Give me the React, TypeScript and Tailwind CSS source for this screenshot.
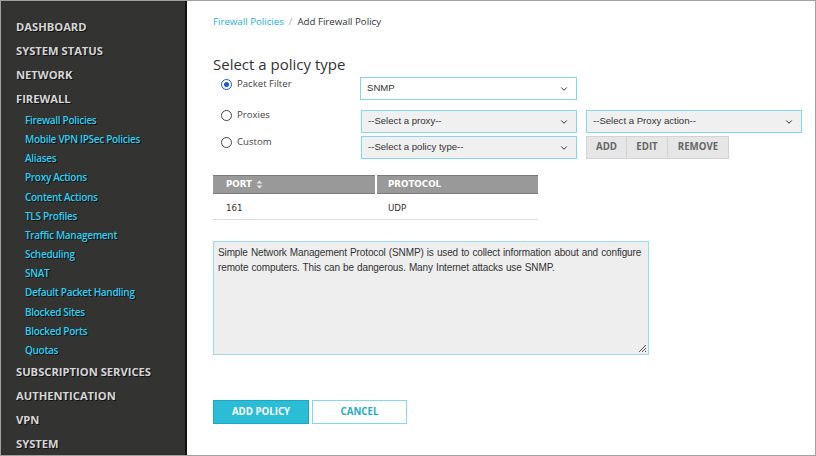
import { ChevronDown } from 'lucide-react';

const sans = { fontFamily: '"Open Sans", "Noto Sans", sans-serif' };
const arial = { fontFamily: '"Liberation Sans", Arial, sans-serif' };

const sections = ['DASHBOARD', 'SYSTEM STATUS', 'NETWORK', 'FIREWALL'];
const firewallItems = [
    'Firewall Policies',
    'Mobile VPN IPSec Policies',
    'Aliases',
    'Proxy Actions',
    'Content Actions',
    'TLS Profiles',
    'Traffic Management',
    'Scheduling',
    'SNAT',
    'Default Packet Handling',
    'Blocked Sites',
    'Blocked Ports',
    'Quotas',
];
const bottomSections = ['SUBSCRIPTION SERVICES', 'AUTHENTICATION', 'VPN', 'SYSTEM'];

function Heading({ label }: { label: string }) {
    return (
        <div className="h-6 leading-6 pl-[15px] text-[11.2px] font-bold text-[#d6d6d6] [text-shadow:1px_1px_0_#111]">
            {label}
        </div>
    );
}

function Select({ text, white, width }: { text: string; white?: boolean; width: string }) {
    return (
        <div
            className={`${width} h-[23px] flex items-center justify-between border border-[#86d6e8] pl-[6px] pr-[7px] text-[9.6px] text-[#333] ${white ? 'bg-white' : 'bg-[#f0f0f0]'}`}
            style={arial}
        >
            <span>{text}</span>
            <ChevronDown size={10} strokeWidth={2.4} className="text-[#333]" />
        </div>
    );
}

function Radio({ checked, label }: { checked?: boolean; label: string }) {
    return (
        <div className="flex items-center gap-[5px] text-[9.6px] text-[#444] leading-[14px]">
            <span
                className={`w-[11px] h-[11px] rounded-full border-[1.5px] flex items-center justify-center ${checked ? 'border-[#1a56d6]' : 'border-[#444]'}`}
            >
                {checked && <span className="w-[5px] h-[5px] rounded-full bg-[#1a56d6]" />}
            </span>
            <span>{label}</span>
        </div>
    );
}

export default function App() {
    return (
        <div className="w-[816px] h-[456px] flex border border-[#a0a0a0] overflow-hidden bg-white" style={sans}>
            {/* 侧边栏 */}
            <div className="w-[186px] shrink-0 bg-[#333332] border-r-2 border-[#111] pt-[14px]">
                {sections.map((s) => (
                    <Heading key={s} label={s} />
                ))}
                <div className="pl-[24px]">
                    {firewallItems.map((item) => (
                        <div key={item} className="h-[19.17px] leading-[19.17px] text-[10px] tracking-[-0.3px] font-semibold text-[#2fd0f2] [text-shadow:1px_1px_0_#111]">
                            {item}
                        </div>
                    ))}
                </div>
                {bottomSections.map((s) => (
                    <Heading key={s} label={s} />
                ))}
            </div>

            {/* 主内容 */}
            <div className="flex-1 pl-[26px] pt-[14px]">
                <div className="text-[9.7px] leading-[14px] flex gap-[5px]">
                    <span className="text-[#27aed0]">Firewall Policies</span>
                    <span className="text-[#aaa]">/</span>
                    <span className="text-[#333]">Add Firewall Policy</span>
                </div>

                <div className="mt-[25px] text-[15px] leading-[20px] text-[#333]">Select a policy type</div>

                <div className="mt-[3px] flex items-start">
                    <div className="w-[147px] pl-[8px]">
                        <Radio checked label="Packet Filter" />
                    </div>
                    <Select text="SNMP" white width="w-[217px]" />
                </div>

                <div className="mt-[10px] flex items-start">
                    <div className="w-[148px] pl-[8px] -mt-[2px]">
                        <Radio label="Proxies" />
                    </div>
                    <Select text="--Select a proxy--" width="w-[216px]" />
                    <div className="ml-[9px]">
                        <Select text="--Select a Proxy action--" width="w-[216px]" />
                    </div>
                </div>

                <div className="mt-[3px] flex items-start">
                    <div className="w-[148px] pl-[8px] -mt-[1px]">
                        <Radio label="Custom" />
                    </div>
                    <Select text="--Select a policy type--" width="w-[216px]" />
                    <div className="ml-[9px] flex h-[23px] text-[9.7px] font-bold text-[#666]">
                        <div className="w-[41px] flex items-center justify-center bg-[#e6e6e6] border border-[#d2d2d2]">ADD</div>
                        <div className="w-[41px] flex items-center justify-center bg-[#e6e6e6] border-y border-r border-[#d2d2d2]">EDIT</div>
                        <div className="w-[61px] flex items-center justify-center bg-[#e6e6e6] border-y border-r border-[#d2d2d2]">REMOVE</div>
                    </div>
                </div>

                {/* 端口表 */}
                <div className="mt-[16px] w-[325px]" style={{ fontFamily: '"DejaVu Sans", Verdana, sans-serif' }}>
                    <div className="flex h-[19px] text-[8.7px] font-bold text-white">
                        <div className="w-[162px] flex items-center gap-[4px] pl-[13px] bg-[#999] border-y border-[#7a7a7a]">
                            <span>PORT</span>
                            <svg width="7" height="9" viewBox="0 0 7 9">
                                <path d="M0.5 3.5 L3.5 0.5 L6.5 3.5 Z M0.5 5.5 L3.5 8.5 L6.5 5.5 Z" fill="#e6e6e6" />
                            </svg>
                        </div>
                        <div className="w-[2px] bg-white" />
                        <div className="flex-1 flex items-center pl-[11px] bg-[#999] border-y border-[#7a7a7a]">PROTOCOL</div>
                    </div>
                    <div className="flex h-[26px] items-center pt-[4px] text-[8.7px] text-[#333] border-b border-[#ddd]">
                        <div className="w-[164px] pl-[13px]">161</div>
                        <div className="pl-[11px]">UDP</div>
                    </div>
                </div>

                {/* 说明 */}
                <div
                    className="relative mt-[21px] w-[436px] h-[114px] border border-[#9cdcea] bg-[#eeeeee] pl-[4px] pr-[2px] pt-[3px] text-[10px] tracking-[-0.13px] [word-spacing:0.5px] leading-[15px] text-[#333] overflow-hidden"
                    style={arial}
                >
                    <div className="whitespace-nowrap">Simple Network Management Protocol (SNMP) is used to collect information about and configure</div>
                    <div>remote computers. This can be dangerous. Many Internet attacks use SNMP.</div>
                    <svg className="absolute right-[1px] bottom-[1px]" width="10" height="10" viewBox="0 0 10 10">
                        <path d="M9 2 L2 9 M9 5 L5 9 M9 8 L8 9" stroke="#555" strokeWidth="1" />
                    </svg>
                </div>

                <div className="mt-[45px] flex gap-[3px] text-[9.7px] font-bold">
                    <div className="w-[96px] h-[24px] flex items-center justify-center bg-[#2bbcd6] border border-[#1ea5c0] text-white">
                        ADD POLICY
                    </div>
                    <div className="w-[95px] h-[24px] flex items-center justify-center bg-white border border-[#86d8ea] text-[#27a9c9]">
                        CANCEL
                    </div>
                </div>
            </div>
        </div>
    );
}
